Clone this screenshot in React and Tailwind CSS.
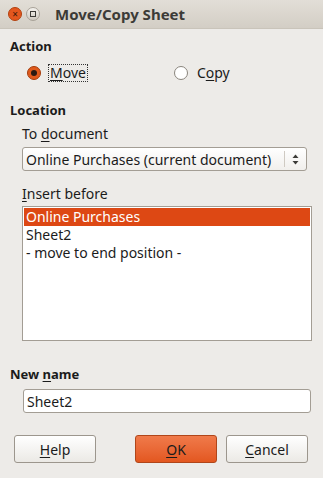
import React from 'react';

const font = { fontFamily: '"Noto Sans", "Open Sans", sans-serif' };

const U = ({ children }) => <span className="underline underline-offset-2">{children}</span>;

const Radio = ({ checked }) =>
  checked ? (
    <span className="w-[14px] h-[14px] rounded-full bg-[#e05a1c] border border-[#a43c0c] flex items-center justify-center">
      <span className="w-[6px] h-[6px] rounded-full bg-[#2b1a12]" />
    </span>
  ) : (
    <span className="w-[14px] h-[14px] rounded-full bg-white border border-[#8a857d]" />
  );

const Button = ({ children, primary }) => (
  <div
    className={`w-[82px] h-[28px] rounded-[3px] border flex items-center justify-center text-[14px] ${
      primary
        ? 'bg-gradient-to-b from-[#f07a4a] to-[#e3571f] border-[#b0461a] text-[#1b1b1b]'
        : 'bg-gradient-to-b from-white to-[#ebe9e5] border-[#9c968d] text-[#1b1b1b]'
    }`}
  >
    {children}
  </div>
);

export default function App() {
  return (
    <div className="w-[323px] h-[478px] bg-[#edebe8] text-[#1b1b1b] flex flex-col" style={font}>
      {/* title bar */}
      <div className="h-[29px] bg-gradient-to-b from-[#e2ded7] to-[#d3cec5] flex items-center border-b border-[#c9c4ba]">
        <span className="ml-[8px] w-[14px] h-[14px] rounded-full bg-[#e4571e] border border-[#b2410f] flex items-center justify-center text-[10px] leading-none text-[#3a1a0a]">
          ×
        </span>
        <span className="ml-[4px] w-[14px] h-[14px] rounded-full bg-gradient-to-b from-[#f4f2ee] to-[#cfcac1] border border-[#a8a298] flex items-center justify-center">
          <span className="w-[6px] h-[6px] border border-[#3c3b37]" />
        </span>
        <span className="ml-[15px] font-bold text-[15px] text-[#3c3b37]">Move/Copy Sheet</span>
      </div>

      <div className="pl-[10px] pr-[11px] pt-[9px] flex flex-col">
        <div className="font-bold text-[13px] leading-[16px]">Action</div>
        <div className="flex items-center mt-[10px] h-[18px]">
          <div className="ml-[17px] flex items-center gap-[8px]">
            <Radio checked />
            <span className="text-[14px] leading-[16px] outline-1 outline-dotted outline-[#333] px-[1px]">
              <U>M</U>ove
            </span>
          </div>
          <div className="ml-[87px] flex items-center gap-[9px]">
            <Radio />
            <span className="text-[14px] leading-[16px]">
              C<U>o</U>py
            </span>
          </div>
        </div>

        <div className="font-bold text-[13px] leading-[16px] mt-[20px]">Location</div>
        <div className="ml-[12px] mt-[8px] text-[14px] leading-[16px]">
          To <U>d</U>ocument
        </div>
        <div className="ml-[12px] mt-[5px] w-[285px] h-[24px] rounded-[3px] border border-[#a39d94] bg-gradient-to-b from-white to-[#f1efec] flex items-center">
          <span className="flex-1 pl-[3px] text-[14px] whitespace-nowrap">Online Purchases (current document)</span>
          <span className="w-[1px] h-[16px] bg-[#cfcac2]" />
          <span className="w-[21px] flex items-center justify-center">
            <svg width="7" height="11" viewBox="0 0 7 11">
              <path d="M3.5 0.5 L6.5 4 H0.5 Z" fill="#3c3b37" />
              <path d="M3.5 10.5 L6.5 7 H0.5 Z" fill="#3c3b37" />
            </svg>
          </span>
        </div>
        <div className="ml-[12px] mt-[15px] text-[14px] leading-[16px]">
          <U>I</U>nsert before
        </div>
        <div className="ml-[12px] mt-[4px] w-[290px] h-[135px] border border-[#a39d94] bg-white p-[1px] text-[14px] leading-[18px]">
          <div className="bg-[#dd4814] text-white pl-[2px]">Online Purchases</div>
          <div className="pl-[2px]">Sheet2</div>
          <div className="pl-[2px]">- move to end position -</div>
        </div>

        <div className="font-bold text-[13px] leading-[16px] mt-[25px]">
          New <U>n</U>ame
        </div>
        <div className="ml-[13px] mt-[7px] w-[288px] h-[24px] rounded-[3px] border border-[#a39d94] bg-white flex items-center pl-[3px] text-[14px]">
          Sheet2
        </div>

        <div className="flex mt-[22px] ml-[4px]">
          <Button>
            <U>H</U>elp
          </Button>
          <div className="ml-[39px]">
            <Button primary>
              <U>O</U>K
            </Button>
          </div>
          <div className="ml-[9px]">
            <Button>
              <U>C</U>ancel
            </Button>
          </div>
        </div>
      </div>
    </div>
  );
}
